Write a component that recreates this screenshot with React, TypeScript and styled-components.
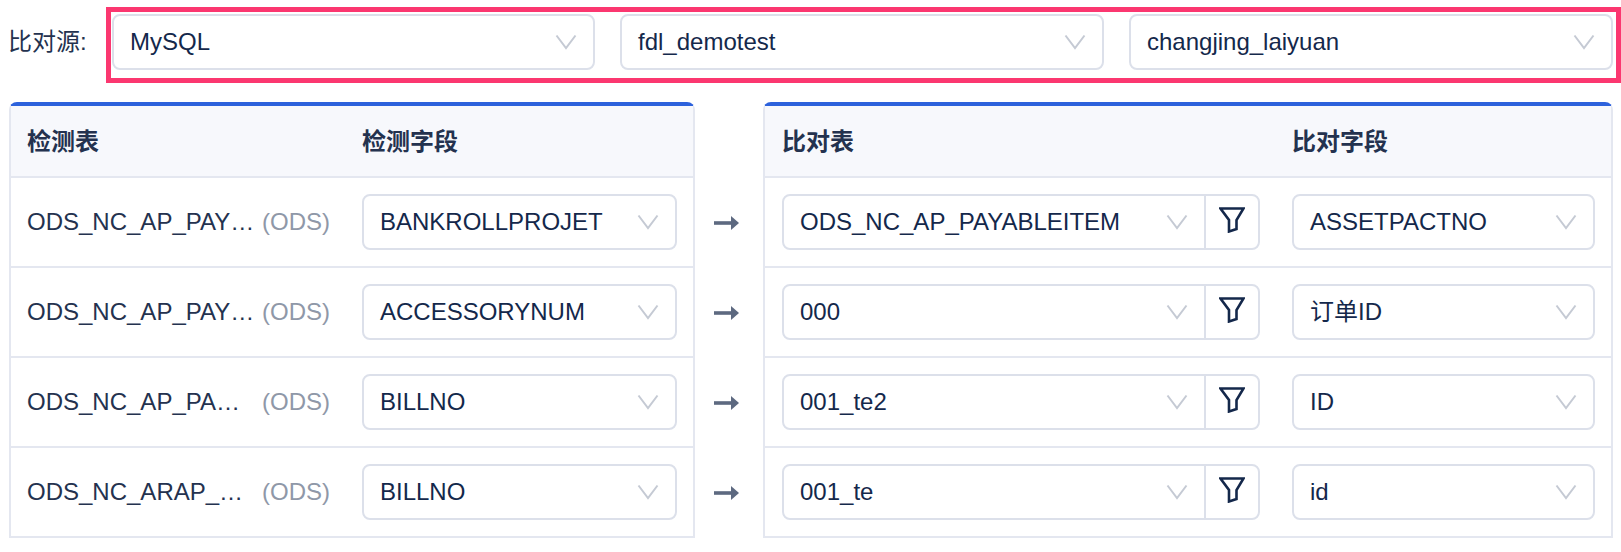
import React from "react"
import styled, { createGlobalStyle } from "styled-components"

const rows = [
  { name: "ODS_NC_AP_PAY…", field: "BANKROLLPROJET", table: "ODS_NC_AP_PAYABLEITEM", target: "ASSETPACTNO" },
  { name: "ODS_NC_AP_PAY…", field: "ACCESSORYNUM", table: "000", target: "订单ID" },
  { name: "ODS_NC_AP_PA…", field: "BILLNO", table: "001_te2", target: "ID" },
  { name: "ODS_NC_ARAP_…", field: "BILLNO", table: "001_te", target: "id" },
]

const Chevron = () => (
  <ChevronIcon width="22" height="16" viewBox="0 0 22 16">
    <polyline points="1.5,1.5 11,14 20.5,1.5" fill="none" stroke="#c5cad4" strokeWidth="2" />
  </ChevronIcon>
)

const Funnel = () => (
  <svg width="26" height="26" viewBox="0 0 26 26">
    <path d="M1.5 1.5H24.5L17.5 13V22L10 24.5V13Z" fill="none" stroke="#14284b" strokeWidth="2.6" strokeLinejoin="miter" />
  </svg>
)

const Arrow = () => (
  <svg width="25" height="16" viewBox="0 0 25 16">
    <path d="M0 8H18" stroke="#5d6980" strokeWidth="3.6" />
    <path d="M17 1L25 8L17 15Z" fill="#5d6980" />
  </svg>
)

const Select = ({ value }: { value: string }) => (
  <SelectBox>
    <SelectText>{value}</SelectText>
    <Chevron />
  </SelectBox>
)

export default function App() {
  return (
    <>
      <GlobalStyle />
      <Page>
        <SourceRow>
          <SourceLabel>比对源:</SourceLabel>
          <Highlight>
            <Select value="MySQL" />
            <Select value="fdl_demotest" />
            <Select value="changjing_laiyuan" />
          </Highlight>
        </SourceRow>
        <Tables>
          <LeftCard>
            <LeftRowHead>
              <span>检测表</span>
              <span>检测字段</span>
            </LeftRowHead>
            {rows.map((row, i) => (
              <LeftRow key={i}>
                <NameCell>
                  <TableName>{row.name}</TableName>
                  <Schema>(ODS)</Schema>
                </NameCell>
                <Select value={row.field} />
              </LeftRow>
            ))}
          </LeftCard>
          <ArrowColumn>
            {rows.map((row, i) => (
              <ArrowCell key={i}>
                <Arrow />
              </ArrowCell>
            ))}
          </ArrowColumn>
          <RightCard>
            <RightRowHead>
              <span>比对表</span>
              <span>比对字段</span>
            </RightRowHead>
            {rows.map((row, i) => (
              <RightRow key={i}>
                <FilterSelect>
                  <FilterMain>
                    <SelectText>{row.table}</SelectText>
                    <Chevron />
                  </FilterMain>
                  <FilterButton>
                    <Funnel />
                  </FilterButton>
                </FilterSelect>
                <Select value={row.target} />
              </RightRow>
            ))}
          </RightCard>
        </Tables>
      </Page>
    </>
  )
}

const GlobalStyle = createGlobalStyle`
  html, body {
    margin: 0;
    background: #fff;
  }
  * {
    box-sizing: border-box;
  }
`

const Page = styled.div`
  width: 1621px;
  height: 552px;
  overflow: hidden;
  padding-top: 7px;
  font-family: "Liberation Sans", "Noto Sans CJK SC", sans-serif;
  font-size: 24px;
  line-height: 28px;
  color: #14284b;
`

const SourceRow = styled.div`
  display: flex;
  align-items: flex-start;
`

const SourceLabel = styled.div`
  width: 106px;
  height: 56px;
  margin-top: 7px;
  padding-left: 8px;
  display: flex;
  align-items: center;
  color: #24324f;
`

const Highlight = styled.div`
  flex: 1;
  height: 76px;
  border: 5px solid #fb3770;
  padding: 2px 0 8px 1px;
  display: grid;
  grid-template-columns: 483px 484px 484px;
  column-gap: 25px;
`

const SelectBox = styled.div`
  display: flex;
  align-items: center;
  justify-content: space-between;
  height: 56px;
  padding: 0 16px;
  border: 2px solid #dce0ea;
  border-radius: 8px;
  background: #fff;
`

const SelectText = styled.span`
  white-space: nowrap;
`

const ChevronIcon = styled.svg`
  flex: none;
`

const Tables = styled.div`
  display: flex;
  margin: 19px 0 0 9px;
`

const Card = styled.div`
  border: 2px solid #e4e7f0;
  border-top: 4px solid #2d62dc;
  border-radius: 8px 8px 0 0;
`

const LeftCard = styled(Card)`
  width: 686px;
`

const RightCard = styled(Card)`
  width: 850px;
`

const LeftGrid = styled.div`
  display: grid;
  grid-template-columns: 335px 315px;
  align-items: center;
  padding-left: 16px;
`

const LeftRowHead = styled(LeftGrid)`
  height: 70px;
  padding-top: 2px;
  background: #f7f8fc;
  font-weight: 700;
  color: #24324f;
`

const LeftRow = styled(LeftGrid)`
  height: 90px;
  border-top: 2px solid #e4e7f0;
`

const RightGrid = styled.div`
  display: grid;
  grid-template-columns: 478px 303px;
  column-gap: 32px;
  align-items: center;
  padding-left: 17px;
`

const RightRowHead = styled(RightGrid)`
  height: 70px;
  padding-top: 2px;
  background: #f7f8fc;
  font-weight: 700;
  color: #24324f;
`

const RightRow = styled(RightGrid)`
  height: 90px;
  border-top: 2px solid #e4e7f0;
`

const NameCell = styled.div`
  display: flex;
  align-items: center;
  white-space: nowrap;
`

const TableName = styled.span`
  width: 235px;
  color: #24324f;
`

const Schema = styled.span`
  color: #8f98a8;
`

const ArrowColumn = styled.div`
  width: 68px;
  padding: 76px 0 0 19px;
`

const ArrowCell = styled.div`
  height: 90px;
  display: flex;
  align-items: center;
`

const FilterSelect = styled.div`
  display: flex;
  height: 56px;
  border: 2px solid #dce0ea;
  border-radius: 8px;
`

const FilterMain = styled.div`
  flex: 1;
  display: flex;
  align-items: center;
  justify-content: space-between;
  padding: 0 16px;
`

const FilterButton = styled.div`
  width: 54px;
  display: flex;
  align-items: flex-start;
  justify-content: center;
  padding-top: 11px;
  border-left: 2px solid #dce0ea;
`
